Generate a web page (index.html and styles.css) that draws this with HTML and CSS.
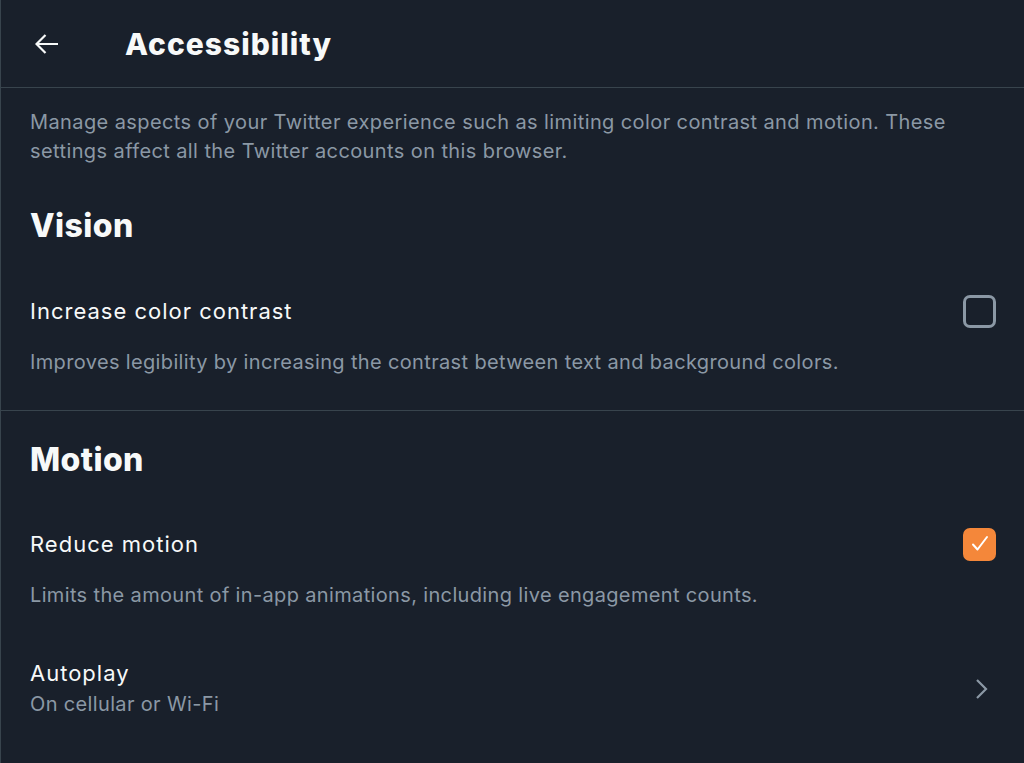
FILE: index.html
```html
<!DOCTYPE html>
<html lang="en">
<head>
    <meta charset="UTF-8">
    <meta name="viewport" content="width=device-width, initial-scale=1.0">
    <title>Accessibility</title>
    <link rel="stylesheet" href="styles.css">
</head>
<body>
    <div class="page">
        <header class="top-bar">
            <button class="back" aria-label="Back">
                <svg viewBox="0 0 24 24" width="24" height="24">
                    <path d="M23 12H1.5M10.5 3L1.5 12l9 9" fill="none" stroke="#f7f9f9" stroke-width="2.2"/>
                </svg>
            </button>
            <h1 class="title">Accessibility</h1>
        </header>

        <p class="intro">Manage aspects of your Twitter experience such as limiting color contrast and motion. These settings affect all the Twitter accounts on this browser.</p>

        <section class="group">
            <h2>Vision</h2>
            <div class="setting">
                <div class="setting-row">
                    <span class="setting-label">Increase color contrast</span>
                    <span class="check"></span>
                </div>
                <p class="setting-desc">Improves legibility by increasing the contrast between text and background colors.</p>
            </div>
        </section>

        <section class="group last">
            <h2>Motion</h2>
            <div class="setting">
                <div class="setting-row">
                    <span class="setting-label">Reduce motion</span>
                    <span class="check checked">
                        <svg viewBox="0 0 24 24" width="24" height="24">
                            <path d="M5 12.5l4.5 5L19 5" fill="none" stroke="#fff" stroke-width="2" stroke-linecap="round" stroke-linejoin="round"/>
                        </svg>
                    </span>
                </div>
                <p class="setting-desc">Limits the amount of in-app animations, including live engagement counts.</p>
            </div>
            <a class="link-row" href="#">
                <div>
                    <div class="setting-label">Autoplay</div>
                    <div class="link-sub">On cellular or Wi-Fi</div>
                </div>
                <svg class="chevron" viewBox="0 0 14 22" width="14" height="22">
                    <path d="M2 2l9 9-9 9" fill="none" stroke="#8b98a5" stroke-width="2.2"/>
                </svg>
            </a>
        </section>
    </div>
</body>
</html>
```
FILE: styles.css
```css
/* Dim theme settings page */
body {
    margin: 0;
    background-color: #19202b;
    color: #f7f9f9;
    font-family: Inter, 'Noto Sans', sans-serif;
}

.page {
    min-height: 763px;
    border-left: 1px solid #38444d;
    box-sizing: border-box;
}

.top-bar {
    display: flex;
    align-items: center;
    height: 87px;
    border-bottom: 1px solid #38444d;
    padding-left: 34px;
}

.back {
    background: none;
    border: none;
    padding: 0;
    width: 24px;
    height: 24px;
    cursor: pointer;
}

.title {
    margin: 0 0 0 66px;
    font-size: 30px;
    font-weight: 800;
    letter-spacing: 1px;
}

.intro {
    margin: 0;
    padding: 20px 40px 0 29px;
    font-size: 20px;
    line-height: 29px;
    letter-spacing: 0.4px;
    color: #8b98a5;
}

.group {
    padding: 41px 27px 33px 29px;
    border-bottom: 1px solid #38444d;
}

.group.last {
    border-bottom: none;
    padding-top: 30px;
}

.group h2 {
    margin: 0;
    font-size: 32px;
    line-height: 38px;
    font-weight: 800;
    letter-spacing: 0.4px;
}

.setting {
    margin-top: 51px;
}

.last .setting {
    margin-top: 50px;
}

.setting-row {
    display: flex;
    align-items: center;
    justify-content: space-between;
    height: 30px;
}

.setting-label {
    font-size: 22px;
    line-height: 30px;
    letter-spacing: 1px;
}

.setting-desc {
    margin: 22px 0 0;
    font-size: 20px;
    line-height: 29px;
    letter-spacing: 0.35px;
    color: #8b98a5;
}

.check {
    width: 33px;
    height: 33px;
    box-sizing: border-box;
    border: 3px solid #8b98a5;
    border-radius: 7px;
    margin-right: 1px;
    display: flex;
    align-items: center;
    justify-content: center;
}

.check.checked {
    background-color: #f4873a;
    border-color: #f4873a;
}

.link-row {
    display: flex;
    align-items: center;
    justify-content: space-between;
    margin-top: 48px;
    color: inherit;
    text-decoration: none;
}

.link-sub {
    margin-top: 2px;
    font-size: 20px;
    line-height: 29px;
    letter-spacing: 0.35px;
    color: #8b98a5;
}

.chevron {
    margin-right: 8px;
}
```
